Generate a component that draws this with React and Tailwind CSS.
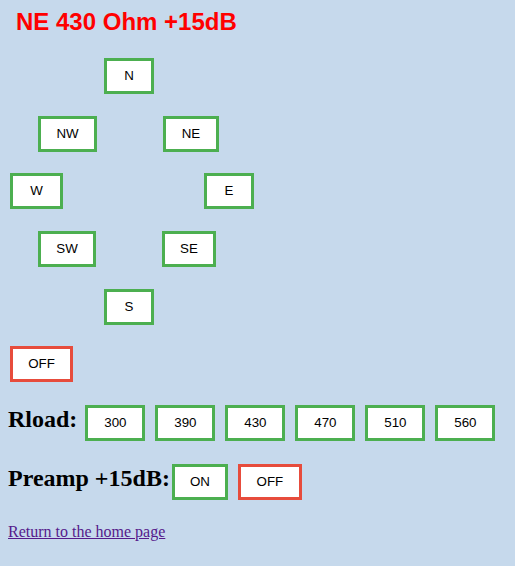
import React from "react";

const G = "border-[#4caf50]";
const R = "border-[#e74c3c]";

function Btn({ label, w, red, className = "" }) {
  return (
    <button
      className={`h-[36px] ${w} border-[3px] border-solid ${red ? R : G} bg-white text-black flex items-center justify-center text-[13.33px] leading-[16px] shrink-0 ${className}`}
      style={{ fontFamily: '"Liberation Sans", Arial, sans-serif' }}
    >
      {label}
    </button>
  );
}

export default function App() {
  const serif = { fontFamily: '"Liberation Serif", "Times New Roman", serif' };
  return (
    <div className="w-[515px] h-[566px] bg-[#c6d9ec] overflow-hidden flex flex-col">
      <h1
        className="mt-[8px] ml-[16px] text-[24px] leading-[28px] font-bold text-[#ff0000]"
        style={{ fontFamily: '"Liberation Sans", Arial, sans-serif' }}
      >
        NE 430 Ohm +15dB
      </h1>

      <div className="flex mt-[22px]">
        <Btn label="N" w="w-[50px]" className="ml-[104px]" />
      </div>
      <div className="flex mt-[22px]">
        <Btn label="NW" w="w-[59px]" className="ml-[38px]" />
        <Btn label="NE" w="w-[56px]" className="ml-[66px]" />
      </div>
      <div className="flex mt-[21px]">
        <Btn label="W" w="w-[53px]" className="ml-[10px]" />
        <Btn label="E" w="w-[50px]" className="ml-[141px]" />
      </div>
      <div className="flex mt-[22px]">
        <Btn label="SW" w="w-[58px]" className="ml-[38px]" />
        <Btn label="SE" w="w-[54px]" className="ml-[66px]" />
      </div>
      <div className="flex mt-[22px]">
        <Btn label="S" w="w-[50px]" className="ml-[104px]" />
      </div>
      <div className="flex mt-[21px]">
        <Btn label="OFF" w="w-[63px]" red className="ml-[10px]" />
      </div>

      <div className="flex items-baseline mt-[23px] pl-[8px]">
        <span className="text-[24px] leading-[28px] font-bold text-black" style={serif}>
          Rload:
        </span>
        <div className="flex items-baseline gap-[10px] ml-[8px]">
          {["300", "390", "430", "470", "510", "560"].map((v) => (
            <Btn key={v} label={v} w="w-[60px]" />
          ))}
        </div>
      </div>

      <div className="flex items-baseline mt-[23px] pl-[8px]">
        <span className="text-[24px] leading-[28px] font-bold text-black" style={serif}>
          Preamp +15dB:
        </span>
        <Btn label="ON" w="w-[56px]" className="ml-[2px]" />
        <Btn label="OFF" w="w-[64px]" red className="ml-[10px]" />
      </div>

      <div className="mt-[19px] pl-[8px]">
        <a
          href="#"
          className="text-[16px] leading-[18px] text-[#551a8b] underline"
          style={serif}
        >
          Return to the home page
        </a>
      </div>
    </div>
  );
}
